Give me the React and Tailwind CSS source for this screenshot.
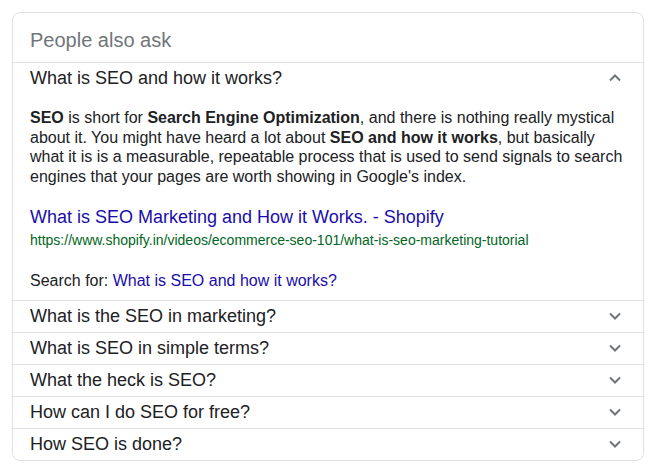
import React from "react";

const questions = [
  "What is the SEO in marketing?",
  "What is SEO in simple terms?",
  "What the heck is SEO?",
  "How can I do SEO for free?",
  "How SEO is done?",
];

const Chevron = ({ up }) => (
  <svg width="14" height="14" viewBox="0 0 14 14" className="shrink-0">
    <polyline
      points={up ? "2,9.5 7,4.5 12,9.5" : "2,4.5 7,9.5 12,4.5"}
      fill="none"
      stroke="#70757a"
      strokeWidth="2"
    />
  </svg>
);

const App = () => {
  return (
    <div
      className="min-h-screen bg-white pt-[12px] pl-[12px]"
      style={{ fontFamily: '"Liberation Sans", Arial, sans-serif' }}
    >
      <div className="w-[632px] border border-[#dfe1e5] rounded-[8px] overflow-hidden">
        <div className="h-[49px] pl-[17px] pt-[15px] text-[20px] leading-[24px] text-[#70757a]">
          People also ask
        </div>

        <div className="border-t border-[#dfe1e5]">
          <div className="h-[30px] pl-[17px] pr-[21px] flex items-center justify-between text-[18px] text-[#202124]">
            <span>What is SEO and how it works?</span>
            <Chevron up />
          </div>
          <div className="pl-[17px] pr-[12px] pt-[15px] pb-[9px]">
            <p className="text-[16px] leading-[19.7px] text-[#202124]">
              <b>SEO</b> is short for <b>Search Engine Optimization</b>, and
              there is nothing really mystical about it. You might have heard a
              lot about <b>SEO and how it works</b>, but basically what it is is
              a measurable, repeatable process that is used to send signals to
              search engines that your pages are worth showing in Google's
              index.
            </p>
            <div className="mt-[19px] text-[18px] leading-[22px] text-[#1a0dab]">
              What is SEO Marketing and How it Works. - Shopify
            </div>
            <div className="mt-[2px] text-[14px] leading-[20px] text-[#006621]">
              https://www.shopify.in/videos/ecommerce-seo-101/what-is-seo-marketing-tutorial
            </div>
            <div className="mt-[21px] text-[16px] leading-[20px] text-[#202124]">
              Search for:{" "}
              <span className="text-[#1a0dab]">What is SEO and how it works?</span>
            </div>
          </div>
        </div>

        {questions.map((q) => (
          <div
            key={q}
            className="border-t border-[#dfe1e5] h-[32px] pl-[17px] pr-[21px] flex items-center justify-between text-[18px] text-[#202124]"
          >
            <span>{q}</span>
            <Chevron />
          </div>
        ))}
      </div>
    </div>
  );
};

export default App;
